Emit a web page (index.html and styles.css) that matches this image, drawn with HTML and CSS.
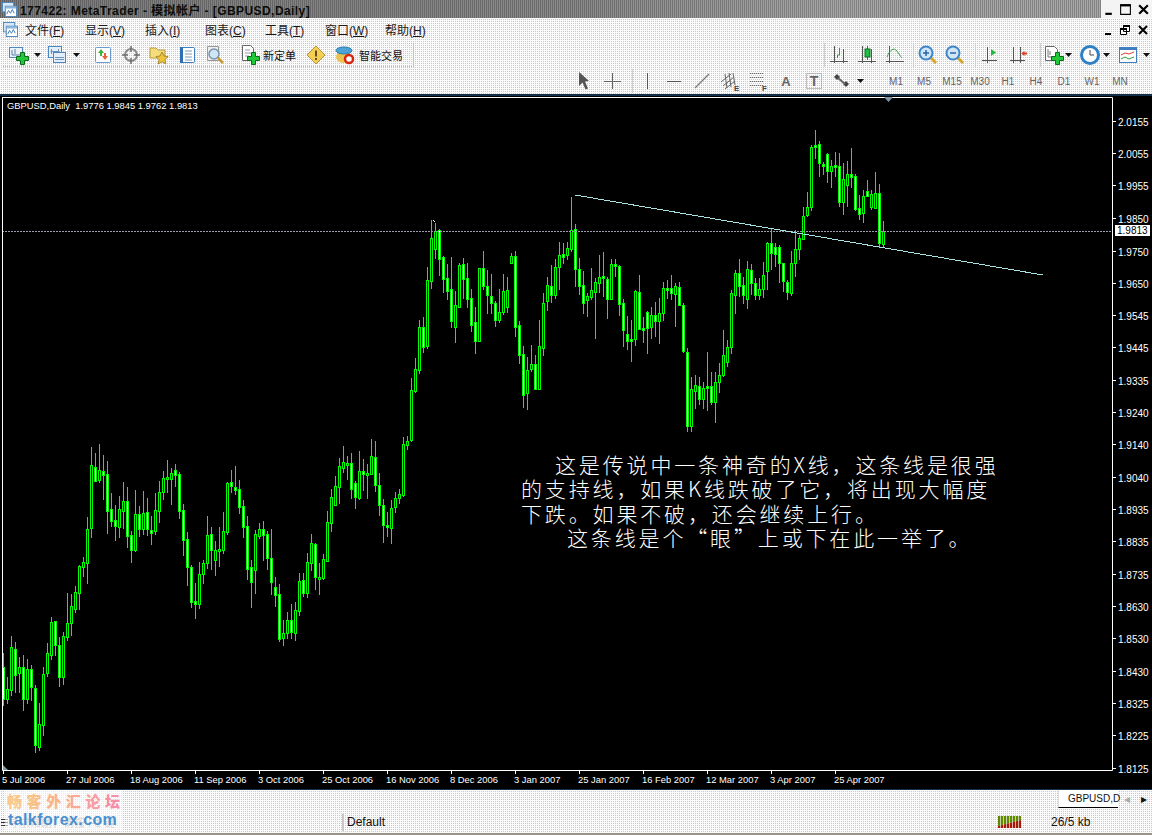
FILE: index.html
```html
<!DOCTYPE html>
<html lang="zh">
<head>
<meta charset="utf-8">
<title>177422: MetaTrader</title>
<link rel="stylesheet" href="styles.css">
</head>
<body>
<svg class="sprite" aria-hidden="true">
  <symbol id="plus" viewBox="0 0 13 13"><path d="M4.5.5h4v4h4v4h-4v4h-4v-4h-4v-4h4z" fill="#22c83a" stroke="#0b6a1c"/></symbol>
  <symbol id="win" viewBox="0 0 16 16"><rect x=".5" y=".5" width="12" height="10" fill="#d9e8f6" stroke="#4d86bd"/><rect x="3.5" y="4.5" width="12" height="11" fill="#fff" stroke="#4d86bd"/><rect x="4" y="5" width="11" height="2" fill="#8db8de"/><path d="M5 13l2-4 2 3 2-4 2 4" fill="none" stroke="#3a7ab5"/></symbol>
  <symbol id="axes" viewBox="0 0 22 22"><path d="M6.5 2v17M2 17.500h18M15.500 5v14" fill="none" stroke="#555"/></symbol>
  <symbol id="dn" viewBox="0 0 7 4"><path d="M0 0h7L3.500 4z" fill="#111"/></symbol>
</svg>

<header class="titlebar">
  <svg class="win16" viewBox="0 0 16 16"><use href="#win"/></svg>
  <h1 class="title">177422: MetaTrader - 模拟帐户 - [GBPUSD,Daily]</h1>
  <div class="winbtns winbtns-top">
    <svg viewBox="0 0 12 12"><path d="M4 10h6" stroke="#000" stroke-width="2"/></svg>
    <svg viewBox="0 0 12 12"><path d="M1.500 2.500h9v8h-9zM1 2h10" fill="none" stroke="#000"/><path d="M1 2h10" stroke="#000" stroke-width="2"/></svg>
    <svg viewBox="0 0 12 12"><path d="M2 2l8 8M10 2l-8 8" stroke="#000" stroke-width="2"/></svg>
  </div>
</header>

<nav class="menubar">
  <svg class="win16" viewBox="0 0 16 16"><use href="#win"/></svg>
  <ul class="menu">
    <li>文件(<u>F</u>)</li><li>显示(<u>V</u>)</li><li>插入(<u>I</u>)</li><li>图表(<u>C</u>)</li><li>工具(<u>T</u>)</li><li>窗口(<u>W</u>)</li><li>帮助(<u>H</u>)</li>
  </ul>
  <div class="winbtns">
    <svg viewBox="0 0 12 12"><path d="M4 10h6" stroke="#000" stroke-width="2"/></svg>
    <svg viewBox="0 0 12 12"><path d="M4.500 1.500h6v6h-6zM1.500 4.500h6v6h-6z" fill="#fff" stroke="#000"/><path d="M4 2h7M1 5h7" stroke="#000" stroke-width="2"/></svg>
    <svg viewBox="0 0 12 12"><path d="M2 2l8 8M10 2l-8 8" stroke="#000" stroke-width="2"/></svg>
  </div>
</nav>

<div class="toolbar tb1">
  <div class="group left">
    <span class="cell"><svg class="ic" viewBox="0 0 22 22"><rect x="2.500" y="3.500" width="13" height="10" fill="#eaf2fa" stroke="#4d86bd"/><path d="M5 6v5h8M8 5v5" fill="none" stroke="#5a7fa5"/><use href="#plus" x="9" y="8" width="13" height="13"/></svg></span>
    <span class="drop m1"><svg viewBox="0 0 7 4"><use href="#dn"/></svg></span>
    <span class="cell m2"><svg class="ic" viewBox="0 0 22 22"><rect x="2.500" y="2.500" width="13" height="11" fill="#e4eef8" stroke="#4d86bd"/><path d="M4.500 7.500h9M5.500 5v5M12.500 5v5" stroke="#6d93b8"/><rect x="7.500" y="8.500" width="12" height="10" fill="#e4eef8" stroke="#4d86bd"/><path d="M9 13.500h9M9 15.500h9" stroke="#6d93b8"/></svg></span>
    <span class="drop m1"><svg viewBox="0 0 7 4"><use href="#dn"/></svg></span>
    <span class="cell m9"><svg class="ic" viewBox="0 0 22 22"><rect x="3.500" y="3.500" width="15" height="15" rx="1" fill="#fff" stroke="#6a9ccb"/><path d="M9 5l-3 4h2v3h2V9h2z" fill="#3db43d"/><path d="M13 16l3-4h-2V9h-2v3h-2z" fill="#e8623a"/></svg></span>
    <span class="cell"><svg class="ic" viewBox="0 0 22 22"><circle cx="11" cy="11" r="6" fill="none" stroke="#8a8a8a" stroke-width="2"/><path d="M11 2v6M11 14v6M2 11h6M14 11h6" stroke="#6e6e6e" stroke-width="1.500"/></svg></span>
    <span class="cell"><svg class="ic" viewBox="0 0 22 22"><path d="M2 4h6l2 2h7v8H2z" fill="#f4dd7c" stroke="#b89b3c"/><path d="M14 8l2 4 4 .6-3 3 .8 4.400-3.800-2.200-3.800 2.200.8-4.400-3-3 4-.6z" fill="#eec33c" stroke="#a9872d"/></svg></span>
    <span class="cell"><svg class="ic" viewBox="0 0 22 22"><rect x="4.500" y="3.500" width="14" height="15" rx="1" fill="#fff" stroke="#3f7fbf"/><rect x="4" y="3" width="3" height="16" fill="#2f6fb5"/><path d="M9 7h7M9 10h7M9 13h7M9 16h7" stroke="#7f9ab8"/></svg></span>
    <span class="cell"><svg class="ic" viewBox="0 0 22 22"><path d="M3.500 2.500h11v14h-11z" fill="#eee" stroke="#999"/><circle cx="10" cy="10" r="5" fill="#cfe4f5" stroke="#7a94ad" stroke-width="1.500"/><path d="M14 14l5 5" stroke="#c99a33" stroke-width="2.500"/></svg></span>
    <span class="cell m6"><svg class="ic" viewBox="0 0 22 22"><path d="M4.500 1.500h8l3 3v12h-11z" fill="#fff" stroke="#666"/><path d="M7 6h5M7 9h6M7 12h4" stroke="#999"/><use href="#plus" x="9" y="8" width="13" height="13"/></svg></span>
    <span class="label">新定单</span>
    <span class="cell m6"><svg class="ic" viewBox="0 0 22 22"><path d="M11 2l9 9-9 9-9-9z" fill="#f3cf55" stroke="#b8923a"/><path d="M11 6.500v6M11 14v2" stroke="#6a4a16" stroke-width="2"/></svg></span>
    <span class="cell m1"><svg class="ic" viewBox="0 0 22 22"><ellipse cx="9" cy="13" rx="7" ry="6" fill="#e9c250"/><ellipse cx="10" cy="6.500" rx="8" ry="3.500" fill="#4ba3d6" stroke="#2a7bab"/><circle cx="15" cy="15" r="4" fill="#fff" stroke="#d8260e" stroke-width="2.500"/></svg></span>
    <span class="label">智能交易</span>
  </div>
  <div class="group right">
    <span class="cell bordered"><svg class="ic" viewBox="0 0 22 22"><use href="#axes"/><path d="M11.500 4v7h-2v3" fill="none" stroke="#19a53a"/></svg></span>
    <span class="cell m1"><svg class="ic" viewBox="0 0 22 22"><use href="#axes"/><path d="M11.500 2v14" stroke="#0a8a2c"/><rect x="9" y="5" width="5" height="8" fill="#19c23f" stroke="#0a6a20"/></svg></span>
    <span class="cell"><svg class="ic" viewBox="0 0 22 22"><path d="M5.500 2v17M2 17.500h18" fill="none" stroke="#555"/><path d="M3 13c3-8 7-9 9-7s4 6 6 8" fill="none" stroke="#3aa04a"/></svg></span>
    <span class="cell m4 bordered"><svg class="ic" viewBox="0 0 22 22"><path d="M13 13l6 6" stroke="#d6a52e" stroke-width="3"/><circle cx="9" cy="9" r="6.500" fill="#cfe6f8" stroke="#3f86c8" stroke-width="2"/><path d="M6 9h6M9 6v6" stroke="#2866a8" stroke-width="1.500"/></svg></span>
    <span class="cell"><svg class="ic" viewBox="0 0 22 22"><path d="M13 13l6 6" stroke="#d6a52e" stroke-width="3"/><circle cx="9" cy="9" r="6.500" fill="#cfe6f8" stroke="#3f86c8" stroke-width="2"/><path d="M6 9h6" stroke="#2866a8" stroke-width="1.500"/></svg></span>
    <span class="cell m6 bordered"><svg class="ic" viewBox="0 0 22 22"><path d="M8.500 3v16M3 16.500h15" fill="none" stroke="#555"/><path d="M12 5v7l5-3.500z" fill="#22b83e"/></svg></span>
    <span class="cell m1"><svg class="ic" viewBox="0 0 22 22"><path d="M6.500 3v16M13.500 3v16M3 16.500h15" fill="none" stroke="#555"/><path d="M15 9.500h5" stroke="#d8402a" stroke-width="2"/><path d="M14.500 9.500l3-2.500v5z" fill="#d8402a"/></svg></span>
    <span class="cell narrow m8 bordered"><svg class="ic" viewBox="0 0 22 22"><path d="M3.500 2.500h9l3 3v11h-12z" fill="#fff" stroke="#666"/><path d="M6 5v8h5M8 7v4" fill="none" stroke="#777"/><use href="#plus" x="9" y="8" width="13" height="13"/></svg></span>
    <span class="drop"><svg viewBox="0 0 7 4"><use href="#dn"/></svg></span>
    <span class="cell narrow m6"><svg class="ic" viewBox="0 0 22 22"><circle cx="11" cy="11" r="8.500" fill="#fff" stroke="#2e7fc4" stroke-width="3"/><path d="M11 6v5h4" fill="none" stroke="#444"/></svg></span>
    <span class="drop"><svg viewBox="0 0 7 4"><use href="#dn"/></svg></span>
    <span class="cell narrow m6"><svg class="ic" viewBox="0 0 22 22"><rect x="2.500" y="3.500" width="17" height="15" fill="#fff" stroke="#3f7fbf"/><rect x="3" y="4" width="16" height="2" fill="#3f7fbf"/><path d="M4 11l4-2 4 1 5-2" fill="none" stroke="#d8402a"/><path d="M4 15l4-2 4 2 5-2" fill="none" stroke="#2aa03a"/></svg></span>
    <span class="drop m2"><svg viewBox="0 0 7 4"><use href="#dn"/></svg></span>
  </div>
</div>

<div class="toolbar tb2">
  <span class="cell"><svg class="ic" viewBox="0 0 22 22"><path d="M6 2l10 9-4 .5 3 7-2.500 1-3-7L6 16z" fill="#555"/></svg></span>
  <span class="cell"><svg class="ic" viewBox="0 0 22 22"><path d="M11.500 3v16M3 11.500h17" stroke="#666"/></svg></span>
  <span class="cell m6 bordered"><svg class="ic" viewBox="0 0 22 22"><path d="M11.500 3v16" stroke="#555"/></svg></span>
  <span class="cell"><svg class="ic" viewBox="0 0 22 22"><path d="M4 11.500h14" stroke="#555"/></svg></span>
  <span class="cell"><svg class="ic" viewBox="0 0 22 22"><path d="M4 18L18 4" stroke="#777" stroke-width="1.200"/></svg></span>
  <span class="cell"><svg class="ic" viewBox="0 0 22 22"><path d="M2 12l10-8M4 16l11-9M6 19l10-8M6 4l2 14M10 3l2 14M14 3l2 12" fill="none" stroke="#666"/><text class="sub" x="15" y="21">E</text></svg></span>
  <span class="cell"><svg class="ic" viewBox="0 0 22 22"><path d="M3 3.500h13M3 7.500h13M3 11.500h13M3 15.500h13" stroke="#666" stroke-dasharray="1 1"/><text class="sub" x="15" y="21">F</text></svg></span>
  <span class="cell glyph">A</span>
  <span class="cell"><svg class="ic" viewBox="0 0 22 22"><rect x="3.500" y="3.500" width="15" height="15" fill="none" stroke="#888" stroke-dasharray="1 1"/><text class="tglyph" x="11" y="16">T</text></svg></span>
  <span class="cell"><svg class="ic" viewBox="0 0 22 22"><path d="M6 4l3 3-3 3-3-3z" fill="#444"/><path d="M15 11l3 3-3 3-3-3z" fill="#444"/><path d="M7 8l7 6" stroke="#666" stroke-width="2"/></svg></span>
  <span class="drop"><svg viewBox="0 0 7 4"><use href="#dn"/></svg></span>
  <ul class="periods">
    <li>M1</li><li>M5</li><li>M15</li><li>M30</li><li>H1</li><li>H4</li><li>D1</li><li>W1</li><li>MN</li>
  </ul>
</div>

<main class="chart">
  <svg id="plot" class="plot" viewBox="0 96 1152 693">
    <g id="candles"></g>
    <path class="hline" d="M2 231.500H1112"/>
    <path class="trend" d="M575 195L1043 275"/>
    <path class="frame" d="M2.500 97v673.500h1110V97.500H2.500"/>
    <path class="marker" d="M884 97h9l-4.500 5z"/>
    <path class="marker" d="M3 765l5 5H3z"/>
    <path class="anchor" d="M433 220h1v1h1v1h-1v-1h-1z"/>
    <text class="info" x="7" y="109">GBPUSD,Daily  1.9776 1.9845 1.9762 1.9813</text>
    <g id="priceaxis"></g>
    <g id="timeaxis"></g>
    <rect class="tag" x="1115" y="225" width="35" height="11"/>
    <text class="tagtext" x="1117" y="234">1.9813</text>
  </svg>
  <div class="note">
    <p class="l1">这是传说中一条神奇的X线，这条线是很强</p>
    <p>的支持线，如果K线跌破了它，将出现大幅度</p>
    <p>下跌。如果不破，还会继续上行。</p>
    <p class="l4">这条线是个“眼”上或下在此一举了。</p>
  </div>
</main>

<div class="tabs">
  <div class="tab">GBPUSD,D</div>
  <span class="tabarrow off">◂</span>
  <span class="tabarrow">▸</span>
</div>

<footer class="status">
  <svg class="lines" viewBox="0 0 7 7"><path d="M0 .5h7M0 3.500h7M0 6.500h7" stroke="#333"/></svg>
  <span class="help">寻求帮助，请按 F1 键</span>
  <span class="profile">Default</span>
  <svg class="conn" viewBox="0 0 23 12">
    <path d="M0 0h23v4L0 10z" fill="#5f8a00"/>
    <path d="M0 12v-2L23 4v8z" fill="#a81a08"/>
    <path d="M2.500 0v12M5.500 0v12M8.500 0v12M11.500 0v12M14.500 0v12M17.500 0v12M20.500 0v12" stroke="#f3f3f3" stroke-opacity=".7"/>
  </svg>
  <span class="traffic">26/5 kb</span>
</footer>

<div class="watermark">
  <div class="wm-cn"><span>畅</span><span>客</span><span>外</span><span>汇</span><span>论</span><span>坛</span></div>
  <div class="wm-en">talkforex.com</div>
</div>

<script src="chart.js"></script>
</body>
</html>
```
FILE: styles.css
```css
* { box-sizing: border-box; }
html, body { margin: 0; padding: 0; }
body {
  width: 1152px;
  height: 835px;
  overflow: hidden;
  position: relative;
  font-family: "Liberation Sans", "Noto Sans CJK SC", sans-serif;
  font-size: 12px;
  color: #111;
  background-color: #f2f2f2;
  background-image:
    linear-gradient(#fbfbfb 1px, transparent 1px),
    linear-gradient(90deg, #fbfbfb 1px, #c9c9c9 1px);
  background-size: 2px 2px;
}
.sprite { position: absolute; width: 0; height: 0; }

.titlebar {
  height: 18px;
  display: flex;
  align-items: center;
  padding-left: 2px;
  background-color: #888;
  background-image:
    linear-gradient(90deg, rgba(0,0,0,.22) 1px, transparent 1px),
    linear-gradient(90deg, #7c7c7c, #8a8a8a 50%, #a6a6a6 72%, #a8a8a8);
  background-size: 2px 2px, 100% 100%;
}
.win16 { width: 15px; height: 15px; flex: none; }
.title {
  margin: 0 0 0 3px;
  font-size: 12px;
  font-weight: 700;
  color: #0c0c0c;
  white-space: nowrap;
  letter-spacing: .43px;
}
.winbtns { margin-left: auto; display: flex; gap: 6px; padding-right: 3px; }
.winbtns svg { width: 12px; height: 12px; }
.winbtns-top {
  height: 18px;
  align-items: center;
  background: #f4f4f4;
  padding: 0 2px 0 0;
  gap: 5px;
}
.winbtns-top svg { width: 13px; height: 13px; }

.menubar {
  height: 23px;
  display: flex;
  align-items: center;
  padding-left: 3px;
}
.menu {
  list-style: none;
  margin: 0 0 0 7px;
  padding: 0;
  display: flex;
}
.menu li { width: 60px; font-size: 12px; white-space: nowrap; color: #1a1a1a; }

.toolbar { display: flex; align-items: center; }
.tb1 { height: 27px; justify-content: space-between; }
.tb2 { height: 26px; padding-left: 570px; }
.group { display: flex; align-items: center; }
.group.left {
  margin-left: 3px;
  height: 24px;
  padding: 0 10px 0 1px;
  border: 1px dotted #bdbdbd;
  border-left: 0;
}
.group.right { padding-right: 2px; }

.cell {
  flex: none;
  width: 28px;
  height: 24px;
  display: flex;
  align-items: center;
  justify-content: center;
}
.cell.narrow { width: 24px; }
.bordered { border-left: 1px solid #cfcfcf; }
.ic { width: 22px; height: 22px; display: block; }
.drop {
  flex: none;
  width: 8px;
  display: flex;
  align-items: center;
  justify-content: center;
}
.drop svg { width: 7px; height: 4px; display: block; }
.m1 { margin-left: 1px; }
.m2 { margin-left: 2px; }
.m4 { margin-left: 4px; }
.m6 { margin-left: 6px; }
.m8 { margin-left: 8px; }
.m9 { margin-left: 9px; }
.label { font-size: 11px; white-space: nowrap; color: #111; }
.glyph { font-weight: 700; font-size: 13px; color: #666; }
.sub { font: 700 8px "Liberation Sans", sans-serif; fill: #444; }
.tglyph { font: 700 14px "Liberation Sans", sans-serif; fill: #666; text-anchor: middle; }

.periods {
  list-style: none;
  margin: 0 0 0 18px;
  padding: 0;
  display: flex;
}
.periods li {
  width: 28px;
  text-align: center;
  font-size: 10px;
  color: #666;
}

.chart {
  position: relative;
  height: 695px;
  background: #000;
  border-top: 2px solid #15304a;
}
.plot { display: block; width: 1152px; height: 693px; }
.hline { stroke: #9a9eae; stroke-width: 1; stroke-dasharray: 2 1; fill: none; }
.trend { stroke: #a9e2e2; stroke-width: 1; fill: none; shape-rendering: crispEdges; }
.frame { stroke: #fff; stroke-width: 1; fill: none; }
.tick { stroke: #fff; stroke-width: 1; }
.marker { fill: #7d97a8; }
.anchor { fill: #fff; }
.info, .axis {
  font-family: "Liberation Sans", sans-serif;
  font-size: 10px;
  fill: #fff;
  white-space: pre;
}
.info, .axis.time { font-size: 9.400px; }
.tag { fill: #fff; }
.tagtext { font-family: "Liberation Sans", sans-serif; font-size: 10px; fill: #000; }

.note {
  position: absolute;
  left: 521px;
  top: 356px;
  width: 500px;
  color: #fff;
  font-family: "Noto Sans CJK SC", sans-serif;
  font-weight: 300;
  font-size: 21px;
  letter-spacing: 2.850px;
  line-height: 24.300px;
}
.note p { margin: 0; white-space: nowrap; }
.note .l1 { padding-left: 34px; }
.note .l4 { padding-left: 46px; }

.tabs {
  height: 20px;
  border-top: 1px solid #15304a;
  display: flex;
  align-items: flex-start;
  padding-left: 1058px;
}
.tab {
  width: 60px;
  height: 18px;
  background: #fff;
  border-left: 1px solid #ddd;
  border-bottom: 1px solid #000;
  padding-left: 9px;
  line-height: 17px;
  font-size: 10px;
  white-space: nowrap;
}
.tabarrow { width: 17px; text-align: center; font-size: 12px; line-height: 18px; color: #111; }
.tabarrow.off { color: #aaa; margin-left: 1px; }

.status {
  height: 26px;
  padding-top: 2px;
  border-bottom: 2px solid #9a9488;
  display: flex;
  align-items: center;
}
.lines { width: 7px; height: 7px; flex: none; margin-left: 1px; }
.help { width: 334px; font-size: 11px; color: #a5a5a5; white-space: nowrap; }
.profile {
  padding-left: 3px;
  border-left: 2px solid #c8c8c8;
  width: 656px;
  font-size: 12px;
  line-height: 17px;
}
.conn { width: 23px; height: 12px; flex: none; }
.traffic { margin-left: 30px; font-size: 12px; }

.watermark {
  position: absolute;
  left: 5px;
  top: 790px;
  width: 117px;
  height: 41px;
  background: rgba(255, 255, 255, .55);
}
.wm-cn {
  display: flex;
  justify-content: space-between;
  padding: 1px 2px 0 2px;
  font-family: "Noto Sans CJK SC", sans-serif;
  font-weight: 900;
  font-size: 15px;
  line-height: 20px;
  color: #f9c98c;
}
.wm-cn span:nth-child(2) { color: #f9c183; }
.wm-cn span:nth-child(3) { color: #f9b58a; }
.wm-cn span:nth-child(4) { color: #f9a994; }
.wm-cn span:nth-child(5) { color: #f89ea2; }
.wm-cn span:nth-child(6) { color: #f68fa8; }
.wm-en {
  font-family: "Liberation Sans", sans-serif;
  font-weight: 700;
  font-size: 16px;
  line-height: 17px;
  padding-left: 3px;
  color: #4a90cf;
  letter-spacing: .4px;
}
```
FILE: chart.js
```js
// Candles: [high, bodyTop, bodyBottom, low, whiteBody], y measured from the section's base at 3x.
var sections = [
  { x: 3, base: 440, rows: [
    [640,682,778,798,1],[712,748,778,792,0],[588,622,750,768,0],[606,628,704,758,1],[652,682,700,758,0],[646,680,778,812,1],[658,688,776,792,0],[676,688,740,782,1],[736,745,916,938,1],[790,853,920,932,0],
    [682,703,854,888,0],[610,640,700,710,0],[532,547,644,660,0],[544,544,616,648,1],[592,616,712,740,1],[576,589,712,734,0],[460,550,590,602,0],[462,499,550,588,0],[438,457,506,518,0],[375,379,458,510,0],
    [352,367,380,410,0],[232,268,370,432,0],[22,76,265,294,0],[40,82,122,126,1],[12,91,119,128,0],[45,94,104,180,1],[64,103,212,282,1],[160,208,242,262,1],[195,241,257,302,1],[168,208,260,293,0],
    [126,184,212,266,0],[142,184,287,324,1],[274,286,329,368,1],[151,223,329,336,0],[198,223,268,290,1],[154,220,266,286,0],[175,217,268,288,1],[228,271,278,315,1],[160,211,272,286,0],[124,157,212,248,0],
    [92,115,155,180,0],[60,112,118,160,0],[85,100,116,194,0],[72,91,104,140,1],[97,103,212,236,1],[193,211,299,348,1],[277,298,380,438,1],[376,382,485,504,1],[430,484,491,537,1],[366,403,491,506,0],
    [361,370,401,432,0],[228,286,368,387,0],[262,283,329,390,1],[304,331,361,408,0],[262,328,334,380,0],[217,274,329,342,0],[126,130,275,285,0],[91,127,137,160,1],[79,142,149,165,1],[121,148,200,222,1],
    [181,199,260,294,1],[229,259,386,420,1],[361,382,425,504,1],[270,283,391,462,0],[250,268,287,297,0],[244,268,284,362,1],[274,283,353,390,1],[267,355,425,465,1],[412,442,464,501,1],[433,463,596,606,1],
    [541,580,593,618,0],[517,541,578,597,0],[492,541,575,598,1],[487,511,578,602,0],[400,424,512,528,0],[400,421,458,472,1],[339,367,458,474,0],[282,310,368,394,0],[310,313,410,450,1],[370,412,413,465,0],
    [342,358,413,420,0],[214,247,362,366,0],[148,172,250,276,0],[109,139,195,198,0],[55,79,140,192,0],[18,67,83,100,0],[48,70,71,120,0],[40,70,146,177,1],[124,130,171,207,1],[34,94,173,180,0],
    [57,94,101,154,1],[72,99,105,177,0],[-3,49,102,105,0],[3,52,134,156,1],[100,136,194,228,1],[178,196,254,309,1],[217,256,262,290,1],[181,203,263,312,0],[156,175,201,219,0],[148,163,173,192,0],
    [-9,13,164,171,0],[-12,4,14,30,0]
  ]},
  { x: 411, base: 200, rows: [
    [534,571,720,725,0],[474,508,572,580,0],[360,382,510,522,0],[350,382,440,458,1],[202,241,437,447,0],[60,115,242,267,0],[68,94,146,178,0],[86,90,176,228,1],[168,172,238,278,1],[192,235,273,300,1],
    [171,268,362,384,1],[272,316,380,428,0],[190,196,320,322,0],[175,193,236,296,1],[190,235,298,324,1],[268,295,376,396,1],[321,367,422,462,1],[204,205,422,423,0],[153,205,257,270,1],[210,259,284,342,1],
    [222,287,308,342,1],[302,310,359,380,1],[268,337,359,368,0],[222,274,337,344,0],[232,271,320,340,0],[158,168,188,190,0],[153,169,380,410,1],[364,376,464,492,1],[438,463,586,624,1],[470,511,580,630,0],
    [435,492,508,515,0],[465,493,566,570,1],[360,439,566,570,0],[278,310,443,468,0],[232,256,302,333,0],[195,257,284,310,1],[178,202,284,296,0],[126,166,200,270,0],[130,163,170,192,1],[125,145,164,180,0],
    [-9,91,146,155,0],[72,88,208,260,1],[175,208,258,284,1],[214,256,308,342,1],[278,289,299,351,0],[205,271,290,300,0],[234,247,276,416,0],[165,232,248,280,0],[156,229,234,290,1],[232,238,296,358,1],
    [176,193,296,298,0],[176,193,198,232,1],[195,199,311,348,1],[297,310,389,441,1],[348,403,422,450,1],[361,418,423,486,1],[270,274,418,438,0],[226,277,387,390,1],[350,385,388,430,1],[334,337,383,462,1],
    [320,344,381,417,0],[306,346,362,412,1],[295,340,362,432,0],[246,265,338,362,0],[240,263,266,298,1],[226,265,278,300,1],[248,259,281,382,0],[246,262,315,318,1],[310,316,452,458,1],[445,455,678,696,1],
    [530,568,678,696,0],[525,556,572,628,0],[532,559,596,616,1],[546,565,598,626,0],[457,557,561,634,1],[515,559,606,614,1],[515,547,606,668,0],[490,526,545,578,0],[390,466,524,530,0],[420,442,485,500,0],
    [270,280,440,462,0],[210,220,284,342,0],[178,220,258,290,1],[232,256,285,312,1],[183,208,298,327,0],[192,211,248,285,1],[235,250,284,300,1],[235,268,285,300,0]
  ]},
  { x: 763, base: 120, rows: [
    [426,466,508,535,0],[365,370,452,510,0],[325,370,400,450,1],[370,382,402,440,1],[376,382,430,490,1],[430,430,484,515,1],[480,486,515,540,1],[392,428,518,528,0],[330,388,430,470,0],[345,354,388,420,0],
    [262,289,356,360,0],[215,262,286,290,0],[76,82,262,272,0],[30,76,82,118,1],[64,73,130,172,1],[125,133,137,166,1],[100,103,152,190,1],[120,139,154,204,0],[97,136,140,170,1],[98,139,245,260,1],
    [128,178,245,284,0],[124,163,194,260,0],[84,163,170,205,1],[162,169,268,272,1],[226,265,281,300,1],[210,229,278,308,0],[180,214,227,230,1],[210,223,260,270,0],[156,220,263,268,0],[192,220,368,380,1],
    [303,334,372,385,0]
  ]}
];

var NS = "http://www.w3.org/2000/svg";
function el(name, attrs, text) {
  var n = document.createElementNS(NS, name);
  for (var k in attrs) n.setAttribute(k, attrs[k]);
  if (text) n.textContent = text;
  return n;
}

var candles = document.getElementById("candles");
sections.forEach(function (s) {
  s.rows.forEach(function (r, i) {
    var x = s.x + i * 4;
    var y = function (v) { return Math.round(s.base + v / 3); };
    var hi = y(r[0]), top = y(r[1]), bot = y(r[2]), lo = y(r[3]);
    if (bot - top < 2) bot = top + 2;
    candles.appendChild(el("rect", { x: x, y: hi, width: 1, height: Math.max(lo - hi, 1), fill: "#00ff00" }));
    candles.appendChild(el("rect", { x: x - 1, y: top, width: 3, height: bot - top + 1, fill: "#00ff00" }));
    if (bot - top >= 2) {
      candles.appendChild(el("rect", { x: x, y: top + 1, width: 1, height: bot - top - 1, fill: r[4] ? "#ffffff" : "#000000" }));
    }
  });
});

var prices = [["2.0155",121],["2.0055",153],["1.9955",185],["1.9850",218],["1.9750",251],["1.9650",283],["1.9545",315],["1.9445",347],["1.9335",380],["1.9240",412],["1.9140",444],["1.9040",477],["1.8935",509],["1.8835",541],["1.8735",574],["1.8630",606],["1.8530",638],["1.8430",671],["1.8325",703],["1.8225",735],["1.8125",768]];
var pa = document.getElementById("priceaxis");
prices.forEach(function (p) {
  pa.appendChild(el("path", { "class": "tick", d: "M1113 " + (p[1] + 0.5) + "h3" }));
  pa.appendChild(el("text", { "class": "axis", x: 1118, y: p[1] + 5 }, p[0]));
});

var times = ["5 Jul 2006","27 Jul 2006","18 Aug 2006","11 Sep 2006","3 Oct 2006","25 Oct 2006","16 Nov 2006","8 Dec 2006","3 Jan 2007","25 Jan 2007","16 Feb 2007","12 Mar 2007","3 Apr 2007","25 Apr 2007"];
var ta = document.getElementById("timeaxis");
times.forEach(function (t, i) {
  var x = 3 + i * 64;
  ta.appendChild(el("path", { "class": "tick", d: "M" + (x + 0.5) + " 771v3" }));
  ta.appendChild(el("text", { "class": "axis time", x: x - 1, y: 783 }, t));
});
```
